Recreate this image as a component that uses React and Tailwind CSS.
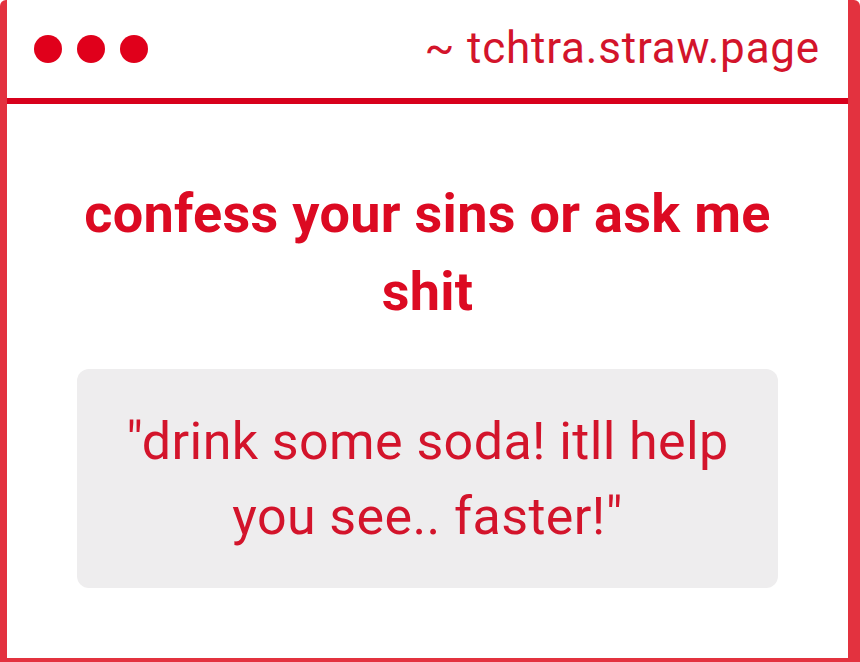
export default function App() {
  return (
    <div className="w-[860px] h-[662px] bg-white overflow-hidden">
      <div className="w-full h-full flex flex-col border-l-[7px] border-r-[12px] border-b-[4px] border-[#e3323f] rounded-tl-[6px] rounded-tr-[6px] font-['Roboto',sans-serif]">
        <div className="h-[98px] flex items-center justify-between pl-[27px] pr-[28px]">
          <div className="flex gap-[15px]">
            <div className="w-[28px] h-[28px] rounded-full bg-[#e0001b]" />
            <div className="w-[28px] h-[28px] rounded-full bg-[#e0001b]" />
            <div className="w-[28px] h-[28px] rounded-full bg-[#e0001b]" />
          </div>
          <div className="text-[44px] tracking-[0.8px] text-[#d3142b] leading-none pb-[2px]">~ tchtra.straw.page</div>
        </div>
        <div className="h-[6px] bg-[#d8001c]" />
        <div className="flex-1 px-[70px] pt-[71px]">
          <h1 className="text-center font-bold text-[54px] tracking-[0.3px] leading-[78px] text-[#dc0a22]">confess your sins or ask me shit</h1>
          <div className="mt-[38px] h-[219px] rounded-[12px] bg-[#eeedee] flex items-center justify-center px-[30px]">
            <p className="text-center text-[52px] tracking-[0.4px] leading-[75px] text-[#d3142b]">"drink some soda! itll help you see.. faster!"</p>
          </div>
        </div>
      </div>
    </div>
  );
}
